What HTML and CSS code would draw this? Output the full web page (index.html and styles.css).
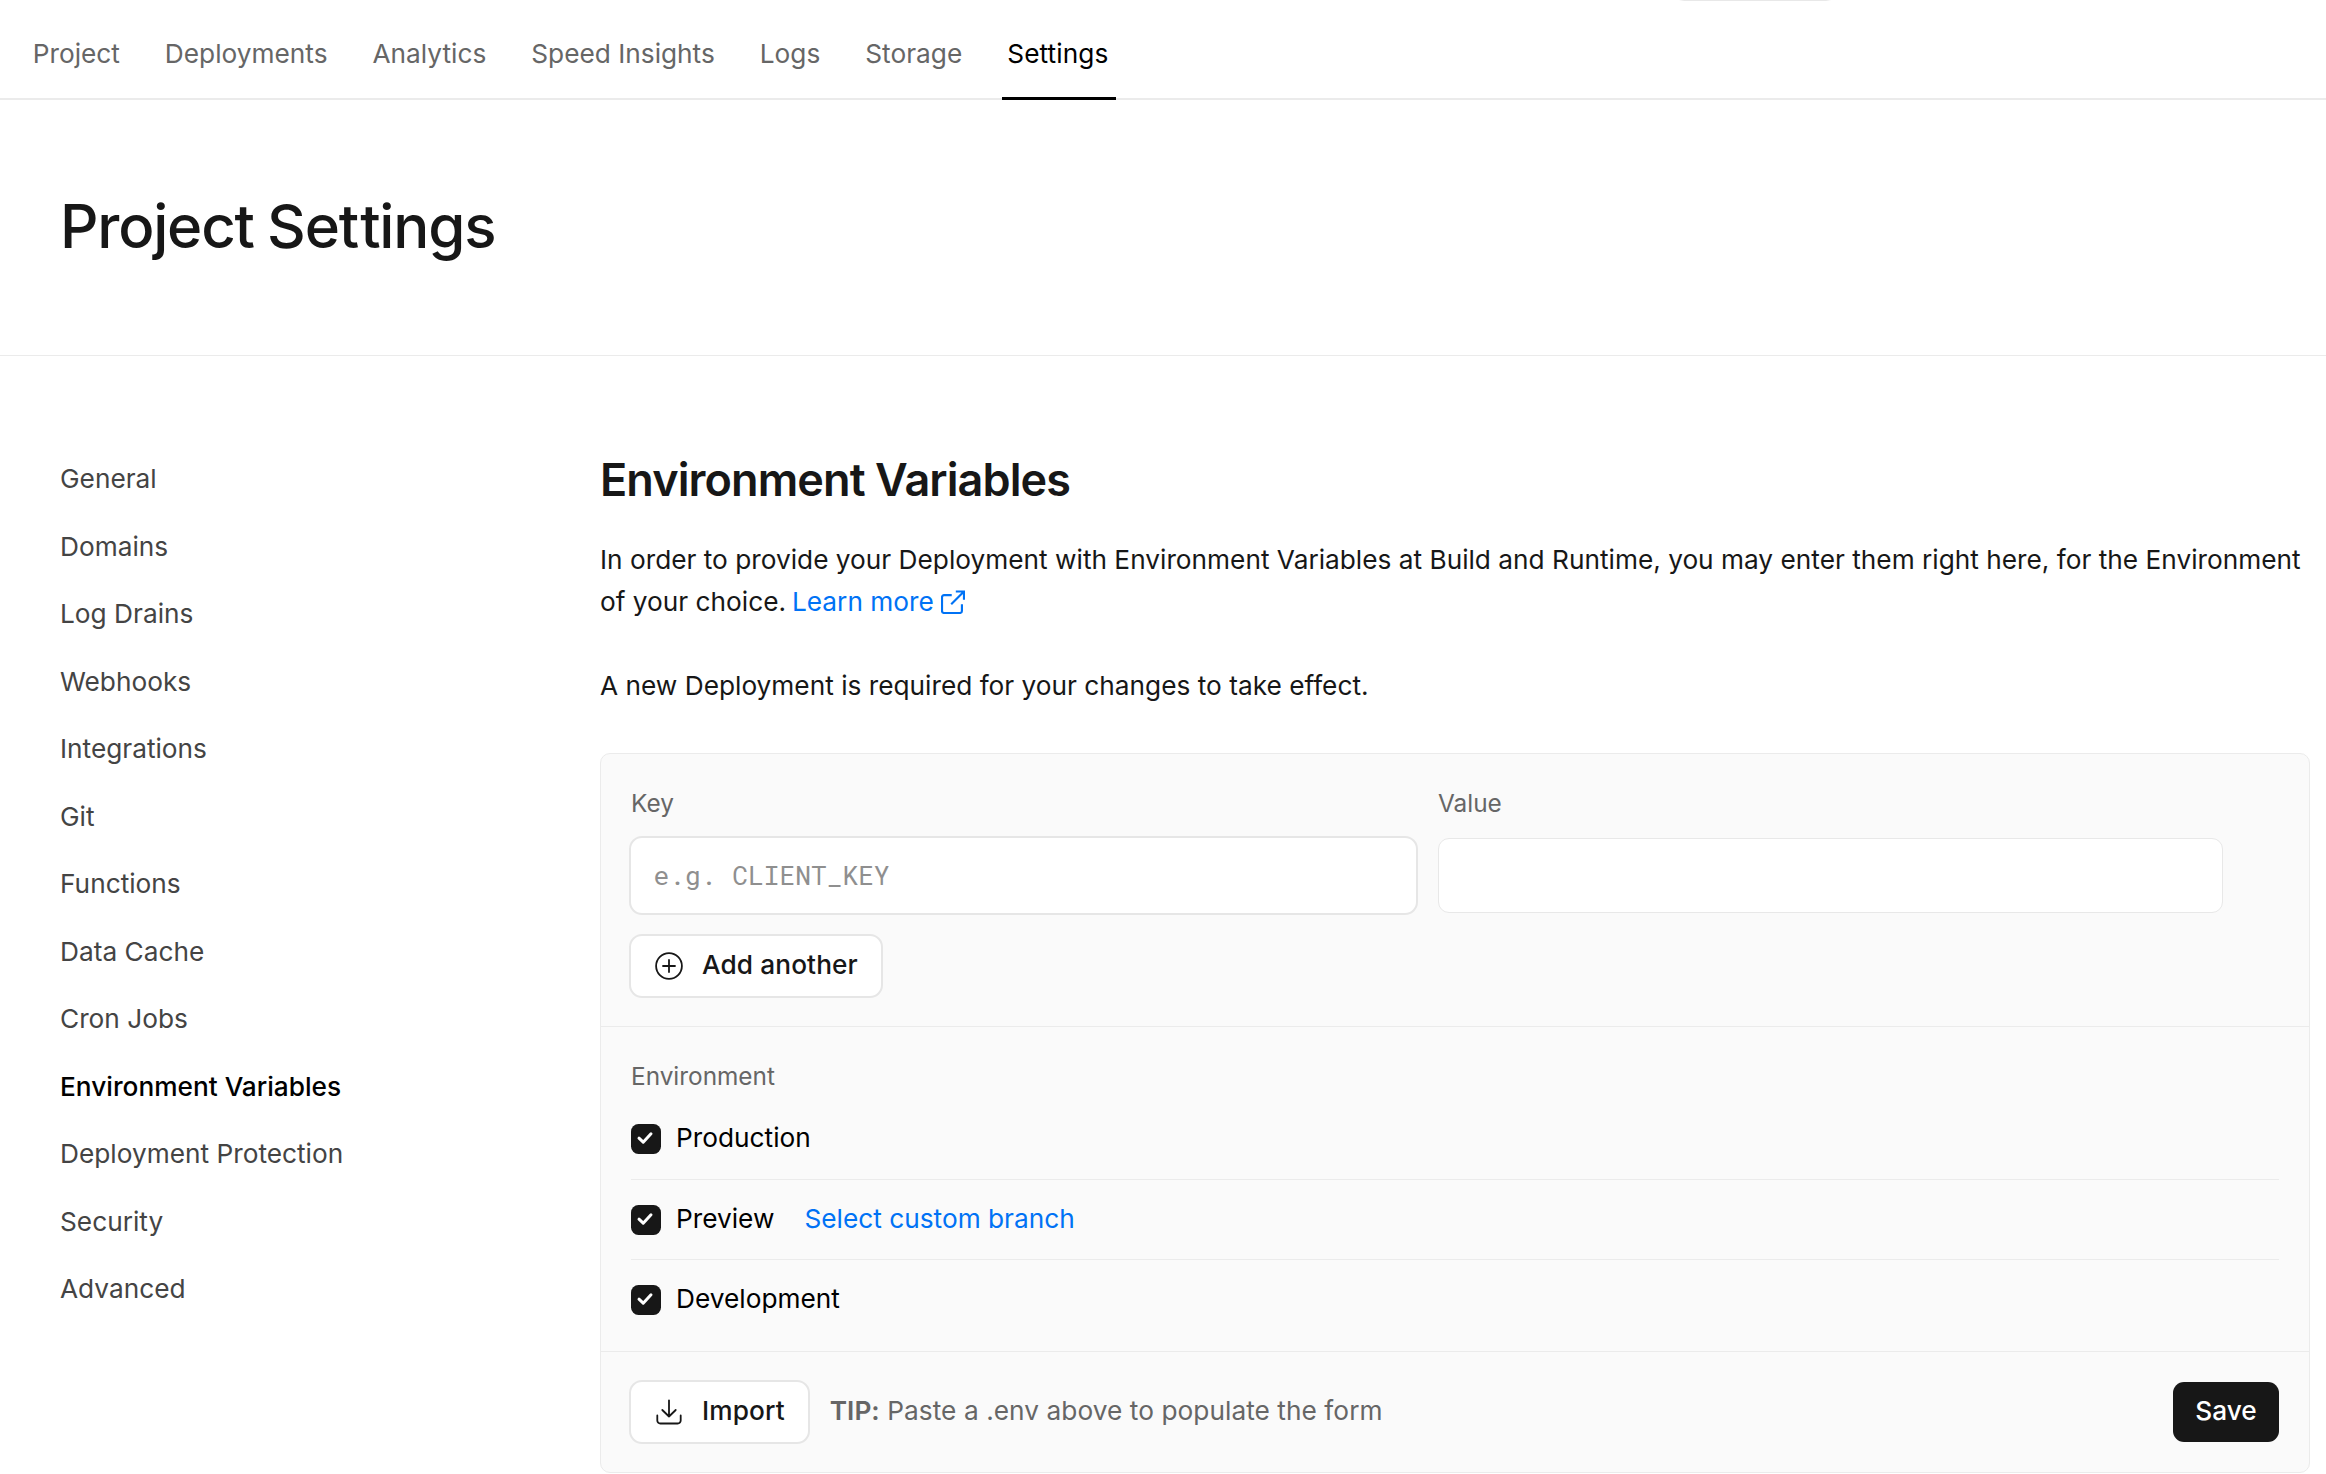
FILE: index.html
```html
<!DOCTYPE html>
<html lang="en">
<head>
<meta charset="utf-8">
<title>Project Settings</title>
<link rel="stylesheet" href="styles.css">
</head>
<body>
<nav class="tabs">
  <a class="tab">Project</a>
  <a class="tab">Deployments</a>
  <a class="tab">Analytics</a>
  <a class="tab">Speed Insights</a>
  <a class="tab">Logs</a>
  <a class="tab">Storage</a>
  <a class="tab tab-active">Settings</a>
</nav>
<div class="top-edge"></div>
<header class="page-header"><h1>Project Se<span class="loose">t</span>tings</h1></header>
<div class="layout">
  <aside class="sidebar">
    <a>General</a>
    <a>Domains</a>
    <a>Log Drains</a>
    <a>Webhooks</a>
    <a>Integrations</a>
    <a>Git</a>
    <a>Functions</a>
    <a>Data Cache</a>
    <a>Cron Jobs</a>
    <a class="current">Environment Variables</a>
    <a>Deployment Protection</a>
    <a>Security</a>
    <a>Advanced</a>
  </aside>
  <main class="content">
    <h2>Environment Variables</h2>
    <p>In order to provide your Deployment with Environment Variables at Build and Runtime, you may enter them right here, for the Environment of your choice. <a class="link learn-more">Learn more<svg class="external" viewBox="0 0 24 24"><path d="M10.500 5H3a2 2 0 0 0-2 2v13.500a2 2 0 0 0 2 2h15.500a2 2 0 0 0 2-2V14M14.500 1.500h8v8M10 14L22.200 1.800"/></svg></a></p>
    <p class="note">A new Deployment is required for your changes to take effect.</p>
    <form class="card">
      <section class="variables">
        <div class="fields">
          <label class="field"><span class="label">Key</span><input class="input input-key" placeholder="e.g. CLIENT_KEY"></label>
          <label class="field"><span class="label">Value</span><input class="input"></label>
        </div>
        <button type="button" class="button button-add"><svg class="icon" viewBox="0 0 28 28"><circle cx="14" cy="14" r="12.9"/><path d="M14 8v12M8 14h12"/></svg><span class="button-text">Add another</span></button>
      </section>
      <section class="environments">
        <span class="label">Environment</span>
        <div class="env"><span class="check"><svg viewBox="0 0 30 30"><path d="M8 14.200l4.200 4L20 9.800"/></svg></span>Production</div>
        <div class="env"><span class="check"><svg viewBox="0 0 30 30"><path d="M8 14.200l4.200 4L20 9.800"/></svg></span>Preview<a class="link branch">Select custom branch</a></div>
        <div class="env"><span class="check"><svg viewBox="0 0 30 30"><path d="M8 14.200l4.200 4L20 9.800"/></svg></span>Development</div>
      </section>
      <footer class="actions">
        <button type="button" class="button"><svg class="icon" viewBox="0 0 28 28"><path d="M14 2.300v16.200M7.300 12l6.700 6.500 6.700-6.500M2.300 17.500v5a3 3 0 0 0 3 3h17.400a3 3 0 0 0 3-3v-5"/></svg><span class="button-text">Import</span></button>
        <span class="tip"><b>TIP:</b> Paste a .env above to populate the form</span>
        <button type="button" class="button-save">Save</button>
      </footer>
    </form>
  </main>
</div>
</body>
</html>
```
FILE: styles.css
```css
* { box-sizing: border-box; }
body {
  margin: 0;
  background: #fff;
  color: #171717;
  font: 400 26.25px/42px Inter, "Liberation Sans", sans-serif;
  height: 1474px;
  overflow: hidden;
}
h1, h2, p { margin: 0; }
.tabs {
  display: flex;
  gap: 31.6px;
  height: 100px;
  padding-left: 26px;
  border-bottom: 2px solid #ebebeb;
}
.tab {
  height: 100px;
  padding: 33px 6.7px 0;
  color: #666;
}
.tab-active {
  margin-left: 1px;
  padding: 33px 7.7px 0 5.7px;
  color: #000;
  border-bottom: 3px solid #000;
  letter-spacing: 0.1px;
}
.top-edge {
  position: absolute;
  top: 0;
  left: 1679px;
  width: 152px;
  height: 1px;
  background: linear-gradient(90deg, #fff, #e8e8e8 5px, #e8e8e8 147px, #fff);
}
.page-header {
  height: 256px;
  padding: 89px 60px 0;
  border-bottom: 1px solid #ebebeb;
}
h1 {
  font-size: 60px;
  line-height: 75px;
  font-weight: 500;
  letter-spacing: -1.2px;
  word-spacing: -1.5px;
}
.loose { letter-spacing: 1px; }
.layout {
  display: grid;
  grid-template-columns: 540px 1710px;
  padding-left: 60px;
}
.sidebar {
  display: flex;
  flex-direction: column;
  padding-top: 90px;
}
.sidebar a {
  height: 67.5px;
  padding-top: 12px;
  color: #444;
}
.sidebar .current {
  color: #000;
  font-weight: 500;
}
.content { padding-top: 94px; }
h2 {
  font-size: 45px;
  line-height: 60px;
  font-weight: 600;
  letter-spacing: -0.9px;
  margin-bottom: 29px;
}
.note { margin: 42px 0 46px; }
.link { color: #0072f5; }
.learn-more { margin-left: -1.5px; }
.external {
  width: 24.5px;
  height: 24.5px;
  margin-left: 7px;
  fill: none;
  stroke: currentColor;
  stroke-width: 2.1;
  vertical-align: -3px;
}
.card {
  height: 720px;
  border: 1px solid #ebebeb;
  border-radius: 10px;
  background: #fafafa;
}
.variables {
  height: 273px;
  padding: 30px 28px 0;
  border-bottom: 1px solid #ebebeb;
}
.fields {
  display: grid;
  grid-template-columns: 789px 785px;
  gap: 20px;
}
.field { display: flex; flex-direction: column; }
.label {
  display: block;
  font-size: 24.375px;
  line-height: 39px;
  color: #666;
}
.field:first-child .label { padding-left: 2px; }
.input {
  height: 75px;
  margin: 15px 0 2px;
  padding: 0 23px;
  border: 1px solid #e8e8e8;
  border-radius: 11px;
  background: #fff;
  font: 26.25px "Roboto Mono", "DejaVu Sans Mono", monospace;
}
.input-key {
  height: 79px;
  margin: 13px 0 0;
  padding: 0 22.5px 2px;
  border: 2px solid #e6e6e6;
  border-radius: 13px;
}
.input::placeholder { color: #8f8f8f; opacity: 1; }
.button {
  display: flex;
  align-items: center;
  gap: 19px;
  height: 64px;
  padding: 0 23px 0 24px;
  border: 2px solid #e6e6e6;
  border-radius: 13px;
  background: #fff;
  color: #171717;
  font: 500 26.25px/42px Inter, sans-serif;
  letter-spacing: 0.1px;
}
.button-text { padding-bottom: 2px; }
.button-add { margin-top: 19px; }
.icon {
  width: 28px;
  height: 28px;
  fill: none;
  stroke: currentColor;
  stroke-width: 1.8;
  stroke-linecap: round;
  stroke-linejoin: round;
}
.environments {
  height: 325px;
  padding: 30px 30px 0;
  border-bottom: 1px solid #ebebeb;
}
.env {
  display: flex;
  height: 80px;
  padding-top: 25px;
  line-height: 28px;
  color: #000;
  border-bottom: 1px solid #ebebeb;
}
.label + .env { padding-top: 28px; height: 84px; }
.env:last-child { border: 0; }
.check {
  width: 30px;
  height: 30px;
  margin-right: 15px;
  border-radius: 7.5px;
  background: #171717;
}
.check svg {
  display: block;
  fill: none;
  stroke: #fff;
  stroke-width: 3;
  stroke-linecap: round;
  stroke-linejoin: round;
}
.branch { margin-left: 30px; }
.actions {
  display: flex;
  align-items: center;
  height: 120px;
  padding: 0 30px 0 28px;
}
.tip {
  margin-left: 20px;
  padding-bottom: 2px;
  color: #666;
  letter-spacing: 0.05px;
}
.tip b { font-weight: 600; }
.button-save {
  width: 106px;
  height: 60px;
  margin-left: auto;
  padding: 0 0 2px;
  border: 0;
  border-radius: 11px;
  background: #171717;
  color: #fff;
  font: 500 26.25px/42px Inter, sans-serif;
}
```
